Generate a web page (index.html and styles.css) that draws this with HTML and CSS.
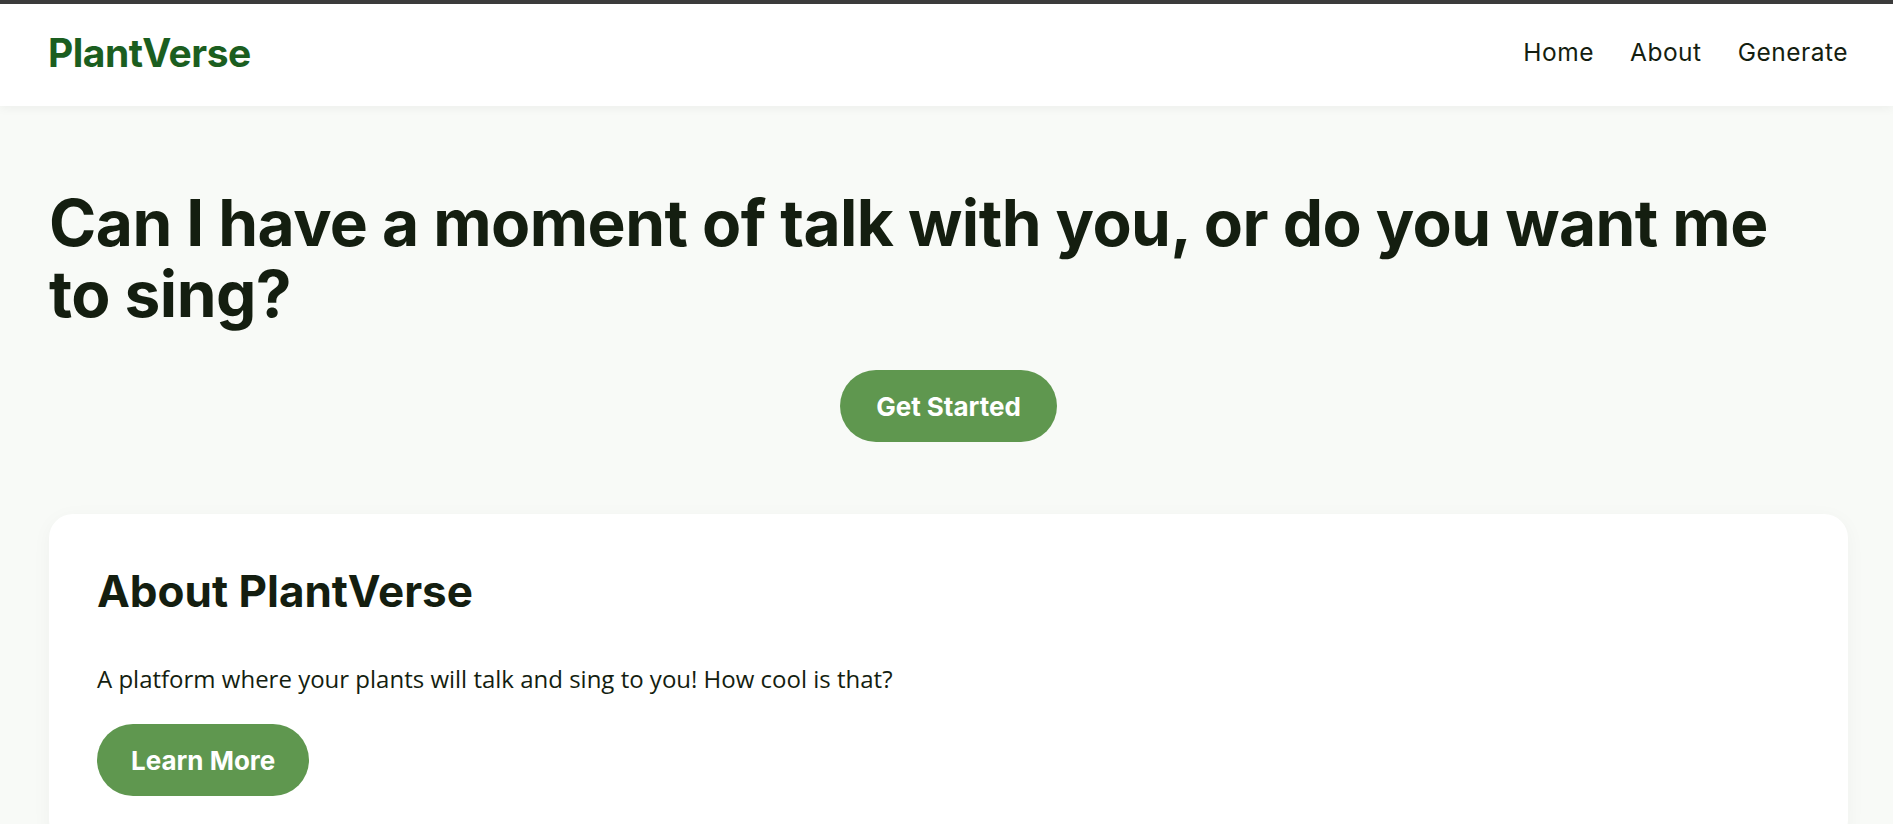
FILE: index.html
```html
<!DOCTYPE html>
<html lang="en">
<head>
<meta charset="utf-8">
<title>PlantVerse</title>
<link rel="stylesheet" href="styles.css">
</head>
<body>
<header class="site-header">
  <a class="logo" href="#">PlantVerse</a>
  <nav class="nav">
    <a href="#">Home</a>
    <a href="#">About</a>
    <a href="#">Generate</a>
  </nav>
</header>
<main class="main">
  <section class="hero">
    <h1 class="hero-title">Can I have a moment of talk with you, or do you want me to sing?</h1>
    <div class="hero-actions">
      <a class="btn" href="#">Get Started</a>
    </div>
  </section>
  <section class="card">
    <h2 class="card-title">About PlantVerse</h2>
    <p class="card-text">A platform where your plants will talk and sing to you! How cool is that?</p>
    <a class="btn btn-compact" href="#">Learn More</a>
  </section>
</main>
</body>
</html>
```
FILE: styles.css
```css
* { box-sizing: border-box; }
html, body { margin: 0; padding: 0; }
body {
  background: #f8faf7;
  color: #141e10;
  font-family: "Open Sans", "Noto Sans", sans-serif;
  border-top: 4px solid #3b3b3b;
  min-height: 100vh;
}
a { text-decoration: none; color: inherit; }

.site-header {
  height: 102px;
  background: #ffffff;
  display: flex;
  align-items: center;
  justify-content: space-between;
  padding: 0 45px 6px 48px;
  box-shadow: 0 2px 10px rgba(0,0,0,0.05);
}
.logo {
  font-family: Inter, sans-serif;
  font-weight: 700;
  font-size: 39px;
  letter-spacing: -0.5px;
  color: #1b5e20;
}
.nav {
  display: flex;
  gap: 36px;
}
.nav a {
  font-family: Inter, sans-serif;
  font-size: 24.5px;
  letter-spacing: 0.5px;
  color: #141e10;
}

.main {
  padding: 40px 45px 0 49px;
}
.hero-title {
  font-family: Inter, sans-serif;
  font-weight: 700;
  font-size: 64px;
  line-height: 71px;
  letter-spacing: -0.55px;
  max-width: 1750px;
  margin: 0;
  padding-top: 41px;
}
.hero-actions {
  display: flex;
  justify-content: center;
  margin-top: 41px;
}
.btn {
  display: inline-flex;
  align-items: center;
  justify-content: center;
  height: 72px;
  padding: 0 36px;
  border-radius: 36px;
  background: #5f974f;
  color: #ffffff;
  font-family: Inter, sans-serif;
  font-weight: 700;
  font-size: 26px;
}
.btn-compact { padding: 0 34px; }
.card {
  margin-top: 72px;
  background: #ffffff;
  border-radius: 24px;
  padding: 50px 48px 48px 48px;
  box-shadow: 0 4px 20px rgba(0,0,0,0.04);
}
.card-title {
  font-family: Inter, sans-serif;
  font-weight: 700;
  font-size: 44px;
  margin: 0;
}
.card-text {
  font-size: 24px;
  margin: 44px 0 29px;
}
```
